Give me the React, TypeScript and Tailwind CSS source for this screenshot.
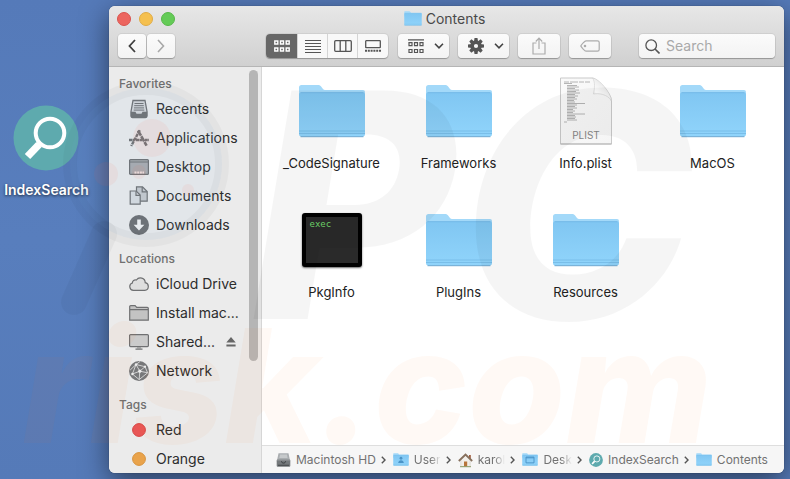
import type { ReactNode } from 'react'

interface SidebarItem {
  label: string
  icon: ReactNode
  eject?: boolean
}

interface SidebarSection {
  title: string
  items: SidebarItem[]
}

const TOOTH_ANGLES = [0, 45, 90, 135, 180, 225, 270, 315]

/* ---------- sidebar icons, all on a 20x20 canvas ---------- */

function SideIcon({ children }: { children: ReactNode }) {
  return (
    <svg viewBox="0 0 20 20" className="size-5 shrink-0" fill="none" stroke="#6f7072" aria-hidden="true">
      {children}
    </svg>
  )
}

function RecentsIcon() {
  return (
    <SideIcon>
      <path d="M4 1.5h12l2 11v4.5a1.5 1.5 0 0 1-1.5 1.5h-13A1.5 1.5 0 0 1 2 17v-4.5z" fill="#d4d6d8" strokeWidth="1.3" />
      <path d="M5.5 4.5h9M5.2 6.7h9.6M5 8.9h10M4.7 11.1h10.6" strokeWidth="1" />
      <path d="M1.8 12.8h4.7l1 2h5l1-2h4.7V17a1.6 1.6 0 0 1-1.7 1.7h-13A1.6 1.6 0 0 1 1.8 17z" fill="#6f7072" stroke="none" />
    </SideIcon>
  )
}

function ApplicationsIcon() {
  return (
    <SideIcon>
      <path d="M9 2.5l8.6 15.2" strokeWidth="2.6" strokeDasharray="6 0.6" />
      <path d="M10.8 2.2L2.2 18" strokeWidth="2.4" strokeDasharray="3.6 0.6" />
      <path d="M0 12h5M7 12h6.5M15.8 12H20" strokeWidth="2.4" strokeDasharray="3 0.4" />
    </SideIcon>
  )
}

function DesktopIcon() {
  return (
    <SideIcon>
      <rect x="0.6" y="2.6" width="18.8" height="14.8" rx="1" fill="#a9abae" strokeWidth="1.2" />
      <path d="M1 5h18" strokeWidth="1" />
      <path d="M5.5 14.5h2v2h-2zM8.2 14.5h2v2h-2zM10.9 14.5h2v2h-2zM13.4 14.5h1.6v2h-1.6z" fill="#f3e6e3" stroke="none" />
    </SideIcon>
  )
}

function DocumentsIcon() {
  return (
    <SideIcon>
      <path d="M7.5 0.8h6l4.7 4.7v9.7H7.5z" fill="#c6c9cc" strokeWidth="1.2" />
      <path d="M13.2 1v4.8H18" strokeWidth="1.2" />
      <path d="M1.2 5h6l4 4v9.2h-10z" fill="#d8dbde" strokeWidth="1.2" />
      <path d="M7 5.2v4.2h4" strokeWidth="1.2" />
    </SideIcon>
  )
}

function DownloadsIcon() {
  return (
    <SideIcon>
      <circle cx="10" cy="10" r="10" fill="#6d6e70" stroke="none" />
      <path d="M8.2 4.6h3.6v5.2h3.6L10 15.6 4.6 9.8h3.6z" fill="#f2f2f2" stroke="none" />
    </SideIcon>
  )
}

function CloudIcon() {
  return (
    <SideIcon>
      <path
        d="M4.4 16.4a3.8 3.8 0 0 1-1-7.4 3 3 0 0 1 4-3 4.8 4.8 0 0 1 8.8 2.7 3.9 3.9 0 0 1-.4 7.7z"
        fill="#dedede"
        strokeWidth="1.2"
      />
    </SideIcon>
  )
}

function DiskFolderIcon() {
  return (
    <SideIcon>
      <path d="M0.7 17.2V3.6a1 1 0 0 1 1-1h4.4l1.6 1.7h10.6a1 1 0 0 1 1 1v11.9z" fill="#c3c3c3" strokeWidth="1.2" />
      <path d="M1 6.6h18" strokeWidth="1.2" />
    </SideIcon>
  )
}

function DisplayIcon() {
  return (
    <SideIcon>
      <rect x="0.6" y="2.6" width="18.8" height="12" rx="1" fill="#cbcbcb" strokeWidth="1.2" />
      <path d="M8 15h4v1.5H8z" fill="#a5a5a5" stroke="none" />
      <path d="M6.5 17.2h7" strokeWidth="1.2" />
    </SideIcon>
  )
}

function NetworkIcon() {
  return (
    <SideIcon>
      <circle cx="10" cy="10" r="10" fill="#77787a" stroke="none" />
      <g stroke="#dcdcdc" strokeWidth="0.9">
        <path d="M7 3.5L1.2 9M7 3.5l9 2.2M7 3.5l3.8 6.7M10.8 10.2L16 5.7M10.8 10.2L3.4 13M10.8 10.2l-.6 8.4M10.8 10.2l7.8 1.6M3.4 13L7 3.5M3.4 13l6.8 5.6M16 5.7l2.6 6.1-8.4 6.8M11 .5L7 3.5" />
      </g>
      <g fill="#ededed" stroke="none">
        <circle cx="7" cy="3.5" r="1.2" />
        <circle cx="10.8" cy="10.2" r="1.6" />
        <circle cx="16" cy="5.7" r="1.1" />
        <circle cx="3.4" cy="13" r="1.2" />
      </g>
    </SideIcon>
  )
}

function TagDot({ color, border }: { color: string; border: string }) {
  return (
    <SideIcon>
      <circle cx="10" cy="10" r="6.4" fill={color} stroke={border} />
    </SideIcon>
  )
}

function EjectIcon() {
  return (
    <svg viewBox="0 0 10 12" className="h-3 w-[10px]" fill="#666" aria-hidden="true">
      <path d="M5 1l4.7 5.6H.3zM.4 8.4h9.2v2H.4z" />
    </svg>
  )
}

/* ---------- file icons ---------- */

function Folder({ className, glyph }: { className: string; glyph?: ReactNode }) {
  return (
    <svg viewBox="0 0 68 54" preserveAspectRatio="none" className={className} aria-hidden="true">
      <defs>
        <linearGradient id="folderFront" x1="0" y1="0" x2="0" y2="1">
          <stop offset="0" stopColor="#80c6f2" />
          <stop offset="1" stopColor="#90d4fb" />
        </linearGradient>
      </defs>
      <path d="M1 8V3.5A2.5 2.5 0 0 1 3.5 1H20c1.5 0 2.500.7 3.300 1.700l1.700 2.200c.7.800 1.500 1.100 2.500 1.100H65a2 2 0 0 1 2 2V20H1z" fill="#a3d9f9" />
      <path d="M1 10.500A2 2 0 0 1 3 8.500h62a2 2 0 0 1 2 2V50a2.500 2.500 0 0 1-2.500 2.500h-61A2.500 2.500 0 0 1 1 50z" fill="url(#folderFront)" />
      <path d="M2.500 8.700h63" stroke="#6cb3e2" strokeWidth="0.8" />
      <path d="M1 47h66M1 49.500h66" stroke="#74b9e4" strokeWidth="0.8" />
      <path d="M2.500 52.700h63" stroke="#69a7d0" strokeWidth="1" />
      {glyph}
    </svg>
  )
}

function PlistFile() {
  return (
    <svg viewBox="0 0 54 68" className="h-[68px] w-[54px]" aria-hidden="true">
      <defs>
        <linearGradient id="pageCurl" x1="0.1" y1="1" x2="0.7" y2="0.2">
          <stop offset="0" stopColor="#c9c9c9" />
          <stop offset="0.35" stopColor="#ffffff" />
          <stop offset="1" stopColor="#e4e4e4" />
        </linearGradient>
        <linearGradient id="pageFill" x1="0" y1="0" x2="1" y2="1">
          <stop offset="0" stopColor="#fafafa" />
          <stop offset="1" stopColor="#f5f5f5" />
        </linearGradient>
      </defs>
      <path d="M1.5 1h32c4 0 19 15 19 23v43h-51z" fill="url(#pageFill)" stroke="#c9c9c9" strokeWidth="1" />
      <path d="M33.5 1c3 4 2 11 1 16 5-1 14 0 18 7 0-8-13-23-19-23z" fill="url(#pageCurl)" stroke="#cfcfcf" strokeWidth="0.6" />
      <path d="M1.5 67h51" stroke="#b5b5b5" />
      <g stroke="#a3a3a3" strokeWidth="0.8">
        <path d="M5 5h26" strokeDasharray="5 1 8 1" />
        <path d="M5 6.5h8M8 8.5h10M8 10h12M8 11.5h8M8 13h12M8 14.5h9M8 16h13M8 17.5h8M8 19h11M8 20.5h8M8 22h10M8 23.5h7M8 25h8M8 26.5h18M8 28h10M8 29.5h8M8 31h10M8 32.5h6M8 34h8M8 35.5h6M8 37h18M8 38.5h8M8 40h9M8 41.5h8M8 43h10M5 45h3" />
      </g>
      <text x="27" y="62" textAnchor="middle" fontSize="10" fill="#868686" fontFamily="Inter, sans-serif">PLIST</text>
    </svg>
  )
}

function ExecFile() {
  return (
    <div className="h-[54px] w-[60px] rounded-[3px] border-4 border-black bg-[#2a2a2a] px-1 shadow-[0_1px_2px_rgba(0,0,0,0.6)]">
      <span className="block font-['DejaVu_Sans_Mono',monospace] text-[9px] leading-[14px] text-[#6fd66a]">exec</span>
    </div>
  )
}

function IndexSearchLogo({ className }: { className: string }) {
  return (
    <svg viewBox="0 0 66 66" className={className} aria-hidden="true">
      <circle cx="33" cy="33" r="32.5" fill="#5eaaae" />
      <circle cx="37" cy="28" r="14.3" fill="none" stroke="#fff" strokeWidth="4" />
      <path d="M27.5 37.5L23.5 41.5" stroke="#fff" strokeWidth="4" />
      <path d="M26 39.5L14.5 51.5" stroke="#fff" strokeWidth="7.5" />
    </svg>
  )
}

/* ---------- path bar icons ---------- */

function HardDriveIcon() {
  return (
    <svg viewBox="0 0 15 16" className="h-4 w-[15px] shrink-0" aria-hidden="true">
      <path d="M2.5 1.2h10l1.7 8.300H.8z" fill="#a9adb0" />
      <path d="M4 2.5h7l.6 3.5H3.4z" fill="#c6c9cb" />
      <rect x="0.7" y="7.5" width="13.6" height="7.300" rx="1" fill="#75797c" />
      <path d="M1 8h13" stroke="#a9adaf" strokeWidth="0.7" />
      <path d="M5.5 9.300c0 2.400 4 2.400 4 0" fill="none" stroke="#383b3d" />
      <path d="M2 13.3h11" stroke="#4b4e50" strokeWidth="1.2" />
    </svg>
  )
}

function HomeIcon() {
  return (
    <svg viewBox="0 0 15 16" className="h-4 w-[15px] shrink-0" aria-hidden="true">
      <path d="M11 3h1.800v4H11z" fill="#a15c3e" />
      <path d="M2.8 7.5L7.5 3.5l4.700 4v7H2.8z" fill="#f1eee9" stroke="#cbc5bd" strokeWidth="0.5" />
      <path d="M.8 9L7.5 2.6 14.2 9" fill="none" stroke="#86705d" strokeWidth="1.8" />
      <path d="M6 9.5h3.200v5H6z" fill="#b7743b" />
      <path d="M2 14.7h11" stroke="#8b9a67" />
    </svg>
  )
}

const usersGlyph = (
  <g fill="#4a94c8">
    <circle cx="34" cy="22" r="6" />
    <path d="M22 42c0-16 24-16 24 0z" />
  </g>
)

const desktopGlyph = (
  <g fill="none" stroke="#4a94c8" strokeWidth="4">
    <path d="M17 17h34v24H17z" />
    <path d="M17 20h34" />
  </g>
)

/* ---------- data ---------- */

const sections: SidebarSection[] = [
  {
    title: 'Favorites',
    items: [
      { label: 'Recents', icon: <RecentsIcon /> },
      { label: 'Applications', icon: <ApplicationsIcon /> },
      { label: 'Desktop', icon: <DesktopIcon /> },
      { label: 'Documents', icon: <DocumentsIcon /> },
      { label: 'Downloads', icon: <DownloadsIcon /> }
    ]
  },
  {
    title: 'Locations',
    items: [
      { label: 'iCloud Drive', icon: <CloudIcon /> },
      { label: 'Install mac...', icon: <DiskFolderIcon /> },
      { label: 'Shared...', icon: <DisplayIcon />, eject: true },
      { label: 'Network', icon: <NetworkIcon /> }
    ]
  },
  {
    title: 'Tags',
    items: [
      { label: 'Red', icon: <TagDot color="#e85656" border="#d64545" /> },
      { label: 'Orange', icon: <TagDot color="#e9a34b" border="#d8933c" /> }
    ]
  }
]

const bigFolder = <Folder className="h-[54px] w-[68px]" />

const files: { name: string; icon: ReactNode }[] = [
  { name: '_CodeSignature', icon: bigFolder },
  { name: 'Frameworks', icon: bigFolder },
  { name: 'Info.plist', icon: <PlistFile /> },
  { name: 'MacOS', icon: bigFolder },
  { name: 'PkgInfo', icon: <ExecFile /> },
  { name: 'PlugIns', icon: bigFolder },
  { name: 'Resources', icon: bigFolder }
]

const smallFolder = 'h-[13px] w-4 shrink-0'

const path: { name: string; icon: ReactNode; faded?: boolean }[] = [
  { name: 'Macintosh HD', icon: <HardDriveIcon /> },
  { name: 'User', icon: <Folder className={smallFolder} glyph={usersGlyph} />, faded: true },
  { name: 'karol', icon: <HomeIcon />, faded: true },
  { name: 'Desk', icon: <Folder className={smallFolder} glyph={desktopGlyph} />, faded: true },
  { name: 'IndexSearch', icon: <IndexSearchLogo className="size-[14px] shrink-0" /> },
  { name: 'Contents', icon: <Folder className={smallFolder} /> }
]

/* ---------- window parts ---------- */

const toolButton =
  'flex h-6 items-center justify-center rounded-[4px] bg-linear-to-b from-[#fbfbfb] to-[#f3f3f3] shadow-[0_0_0_1px_rgba(0,0,0,0.06),0_1px_1px_rgba(0,0,0,0.25)]'

function Chevron() {
  return (
    <svg viewBox="0 0 10 6" className="h-[6px] w-[10px]" fill="none" stroke="#444" strokeWidth="1.6" aria-hidden="true">
      <path d="M1 .8l4 4 4-4" />
    </svg>
  )
}

function Toolbar() {
  return (
    <header className="border-b border-[#b5b5b5] bg-linear-to-b from-[#e7e7e7] to-[#d0d0d0]">
      <div className="relative flex h-[25px] items-center justify-center">
        <div className="absolute left-2 flex items-center gap-2">
          <button aria-label="Close" className="size-[14px] rounded-full border border-[#d9534e] bg-[#ec655f]" />
          <button aria-label="Minimize" className="size-[14px] rounded-full border border-[#dfab45] bg-[#f5c04f]" />
          <button aria-label="Zoom" className="size-[14px] rounded-full border border-[#57b749] bg-[#64cb57]" />
        </div>
        <h1 className="flex items-center gap-1 pr-1 text-[14px] leading-5 text-[#4a4a4a]">
          <Folder className="h-[15px] w-[18px]" />
          Contents
        </h1>
      </div>

      <div className="flex h-[35px] items-start pt-[3px] pr-[9px] pl-[9px]">
        <div className="flex gap-px">
          <button aria-label="Back" className={`${toolButton} w-7`}>
            <svg viewBox="0 0 8 14" className="h-[14px] w-2" fill="none" stroke="#3f3f3f" strokeWidth="1.8">
              <path d="M7 1L1.5 7 7 13" />
            </svg>
          </button>
          <button aria-label="Forward" className={`${toolButton} w-7`}>
            <svg viewBox="0 0 8 14" className="h-[14px] w-2" fill="none" stroke="#a8a8a8" strokeWidth="1.6">
              <path d="M1 1l5.5 6L1 13" />
            </svg>
          </button>
        </div>

        <div className="flex-[91]" />

        <div className="flex h-6 divide-x divide-[#d4d4d4] overflow-hidden rounded-[4px] bg-[#f8f8f8] shadow-[0_0_0_1px_rgba(0,0,0,0.06),0_1px_1px_rgba(0,0,0,0.25)]">
          <button aria-label="Icon view" className="flex w-8 items-center justify-center bg-[#676767]">
            <svg viewBox="0 0 16 12" className="h-3 w-4" fill="none" stroke="#fff" strokeWidth="1.4">
              <path d="M.8 1h3v3h-3zM6.5 1h3v3h-3zM12.2 1h3v3h-3zM.8 8h3v3h-3zM6.5 8h3v3h-3zM12.2 8h3v3h-3z" />
            </svg>
          </button>
          <button aria-label="List view" className="flex w-[30px] items-center justify-center">
            <svg viewBox="0 0 16 13" className="h-[13px] w-4" stroke="#555" strokeWidth="1">
              <path d="M0 .5h16M0 3.500h16M0 6.500h16M0 9.500h16M0 12.500h16" />
            </svg>
          </button>
          <button aria-label="Column view" className="flex w-[30px] items-center justify-center">
            <svg viewBox="0 0 18 12" className="h-3 w-[18px]" fill="none" stroke="#555" strokeWidth="1.3">
              <rect x="0.7" y="0.7" width="16.6" height="10.6" rx="1" />
              <path d="M6.2 1v10M11.8 1v10" />
            </svg>
          </button>
          <button aria-label="Gallery view" className="flex w-[30px] items-center justify-center">
            <svg viewBox="0 0 16 12" className="h-3 w-4" fill="none" stroke="#555" strokeWidth="1.3">
              <rect x="0.7" y="0.7" width="14.6" height="7" rx="0.5" />
              <path d="M0 10.7h16" strokeWidth="2" strokeDasharray="2 0.8" />
            </svg>
          </button>
        </div>

        <button aria-label="Arrange" className={`${toolButton} ml-[10px] w-[51px] gap-[10px] pl-1`}>
          <svg viewBox="0 0 16 15" className="h-[15px] w-4" fill="none" stroke="#555" strokeWidth="1.2">
            <path d="M0 .8h16M1 3.6h3v3H1zM6.5 3.6h3v3h-3zM12 3.6h3v3h-3zM1 10.5h3v3H1zM6.5 10.5h3v3h-3zM12 10.5h3v3h-3z" />
          </svg>
          <Chevron />
        </button>

        <button aria-label="Action" className={`${toolButton} ml-[9px] w-[51px] gap-[10px] pl-1`}>
          <svg viewBox="-8 -8 16 16" className="size-4" fill="#555">
            {TOOTH_ANGLES.map((angle) => (
              <path key={angle} d="M-1.5-8h3l.6 4h-4.200z" transform={`rotate(${angle})`} />
            ))}
            <path fillRule="evenodd" d="M0-5.5A5.5 5.5 0 1 1 0 5.5 5.5 5.5 0 0 1 0-5.5zM0-2.1A2.1 2.1 0 1 0 0 2.1 2.1 2.1 0 0 0 0-2.1z" />
          </svg>
          <Chevron />
        </button>

        <button aria-label="Share" className={`${toolButton} ml-[9px] w-[42px]`}>
          <svg viewBox="0 0 14 18" className="h-[18px] w-[14px]" fill="none" stroke="#acacac" strokeWidth="1.2">
            <path d="M4.5 6H1v11h12V6H9.500M7 12V1.500M3.800 4.500L7 1.200l3.200 3.300" />
          </svg>
        </button>

        <button aria-label="Tags" className={`${toolButton} ml-[9px] w-[42px]`}>
          <svg viewBox="0 0 20 12" className="h-3 w-5" fill="none" stroke="#acacac" strokeWidth="1.2">
            <path d="M6 .8h11.500a1.700 1.700 0 0 1 1.700 1.700v7a1.700 1.700 0 0 1-1.700 1.700H6c-1 0-4.800-4-5.200-5.200C1.200 4.800 5 .8 6 .8z" />
            <circle cx="5" cy="6" r="0.7" fill="#acacac" />
          </svg>
        </button>

        <div className="flex-[28]" />

        <label className={`${toolButton} w-[136px] gap-[6px] px-[6px]`}>
          <svg viewBox="0 0 15 15" className="size-[15px] shrink-0" fill="none" stroke="#555" strokeWidth="1.3" aria-hidden="true">
            <circle cx="6.2" cy="6.2" r="5.3" />
            <path d="M10 10l4.500 4.500" strokeWidth="1.6" />
          </svg>
          <input
            type="text"
            aria-label="Search"
            placeholder="Search"
            className="w-full min-w-0 bg-transparent text-[14px] leading-5 outline-none placeholder:text-[#a9a9a9]"
          />
        </label>
      </div>
    </header>
  )
}

function Sidebar() {
  return (
    <aside className="flex w-[153px] shrink-0 border-r border-[#d6d6d6] bg-[#ebebeb]">
      <nav className="flex min-w-0 flex-1 flex-col gap-[11px] pt-2">
        {sections.map((section) => (
          <section key={section.title}>
            <h2 className="h-[19px] pl-[10px] text-[12px] leading-[18px] font-medium text-[#707070]">{section.title}</h2>
            <ul>
              {section.items.map((item) => (
                <li key={item.label}>
                  <a href="#" className="flex h-[29px] items-center gap-[7px] pl-5 text-[14px] leading-5 whitespace-nowrap text-[#2d2d2d]">
                    {item.icon}
                    {item.label}
                    {item.eject && (
                      <span className="ml-1">
                        <EjectIcon />
                      </span>
                    )}
                  </a>
                </li>
              ))}
            </ul>
          </section>
        ))}
      </nav>
      <div className="mt-[3px] mr-[3px] h-[291px] w-[9px] rounded-full bg-[#b5b5b5]" />
    </aside>
  )
}

function PathBar() {
  return (
    <footer className="flex h-7 items-center justify-between overflow-hidden border-t border-[#dedede] bg-[#f6f6f6] pr-4 pl-[14px] text-[12px] leading-4 text-[#727272]">
      {path.map((entry, index) => (
        <div key={entry.name} className="flex items-center gap-[5px] whitespace-nowrap">
          {entry.icon}
          {entry.faded ? (
            <span className="[mask-image:linear-gradient(to_right,black_60%,transparent)]">{entry.name}</span>
          ) : (
            <span>{entry.name}</span>
          )}
          {index < path.length - 1 && (
            <svg viewBox="0 0 5 8" className="h-2 w-[5px]" fill="none" stroke="#555" strokeWidth="1.4" aria-hidden="true">
              <path d="M.8 .8L4 4 .8 7.2" />
            </svg>
          )}
        </div>
      ))}
    </footer>
  )
}

function Watermark() {
  return (
    <svg
      viewBox="0 0 790 479"
      preserveAspectRatio="xMinYMin meet"
      className="pointer-events-none absolute inset-0 h-full w-full select-none"
      aria-hidden="true"
    >
      <circle cx="146" cy="164" r="76" fill="#6fa5e8" fillOpacity="0.07" stroke="#000" strokeOpacity="0.03" strokeWidth="14" />
      <path d="M104 234L74 302" stroke="#000" strokeOpacity="0.035" strokeWidth="26" strokeLinecap="round" />
      <g fill="#ff6040" fillOpacity="0.07">
        <circle cx="152" cy="138" r="19" />
        <circle cx="106" cy="174" r="12" />
        <circle cx="139" cy="172" r="7" />
        <circle cx="188" cy="190" r="6" />
      </g>
      <g fontFamily="Inter, sans-serif" fontStyle="italic" fontWeight="800">
        <g fontSize="314" fill="#000" fillOpacity="0.038">
          <text x="250" y="319">P</text>
          <text x="460" y="319">C</text>
        </g>
        <text x="22" y="443" fontSize="158" fill="#ff6a20" fillOpacity="0.045">risk.com</text>
      </g>
    </svg>
  )
}

export default function App() {
  return (
    <div className="relative flex min-h-screen overflow-hidden bg-linear-to-b from-[#557ab9] via-[#587ebd] to-[#557ab8] pt-[6px] pr-[6px] pb-[6px] font-['Inter','Liberation_Sans',sans-serif]">
      <div className="flex w-[109px] shrink-0 justify-center pt-[99px] pr-4">
        <a href="#" className="flex h-fit flex-col items-center gap-[9px]">
          <IndexSearchLogo className="size-[66px]" />
          <span className="text-[14px] leading-5 font-semibold text-white [text-shadow:0_1px_3px_rgba(0,0,0,0.7)]">IndexSearch</span>
        </a>
      </div>

      <main className="flex min-w-0 flex-1 flex-col overflow-hidden rounded-[6px] bg-white shadow-[0_8px_28px_rgba(0,0,0,0.5),0_0_1px_rgba(0,0,0,0.5)]">
        <Toolbar />
        <div className="flex flex-1">
          <Sidebar />
          <div className="flex min-w-0 flex-1 flex-col">
            <ul className="grid flex-1 grid-cols-4 content-start gap-y-[33px] pt-[10px] pr-2 pl-[6px]">
              {files.map((file) => (
                <li key={file.name} className="flex flex-col items-center gap-2">
                  <div className="flex h-[68px] items-center">{file.icon}</div>
                  <span className="text-[13px] leading-5 text-[#222]">{file.name}</span>
                </li>
              ))}
            </ul>
            <PathBar />
          </div>
        </div>
      </main>

      <Watermark />
    </div>
  )
}
